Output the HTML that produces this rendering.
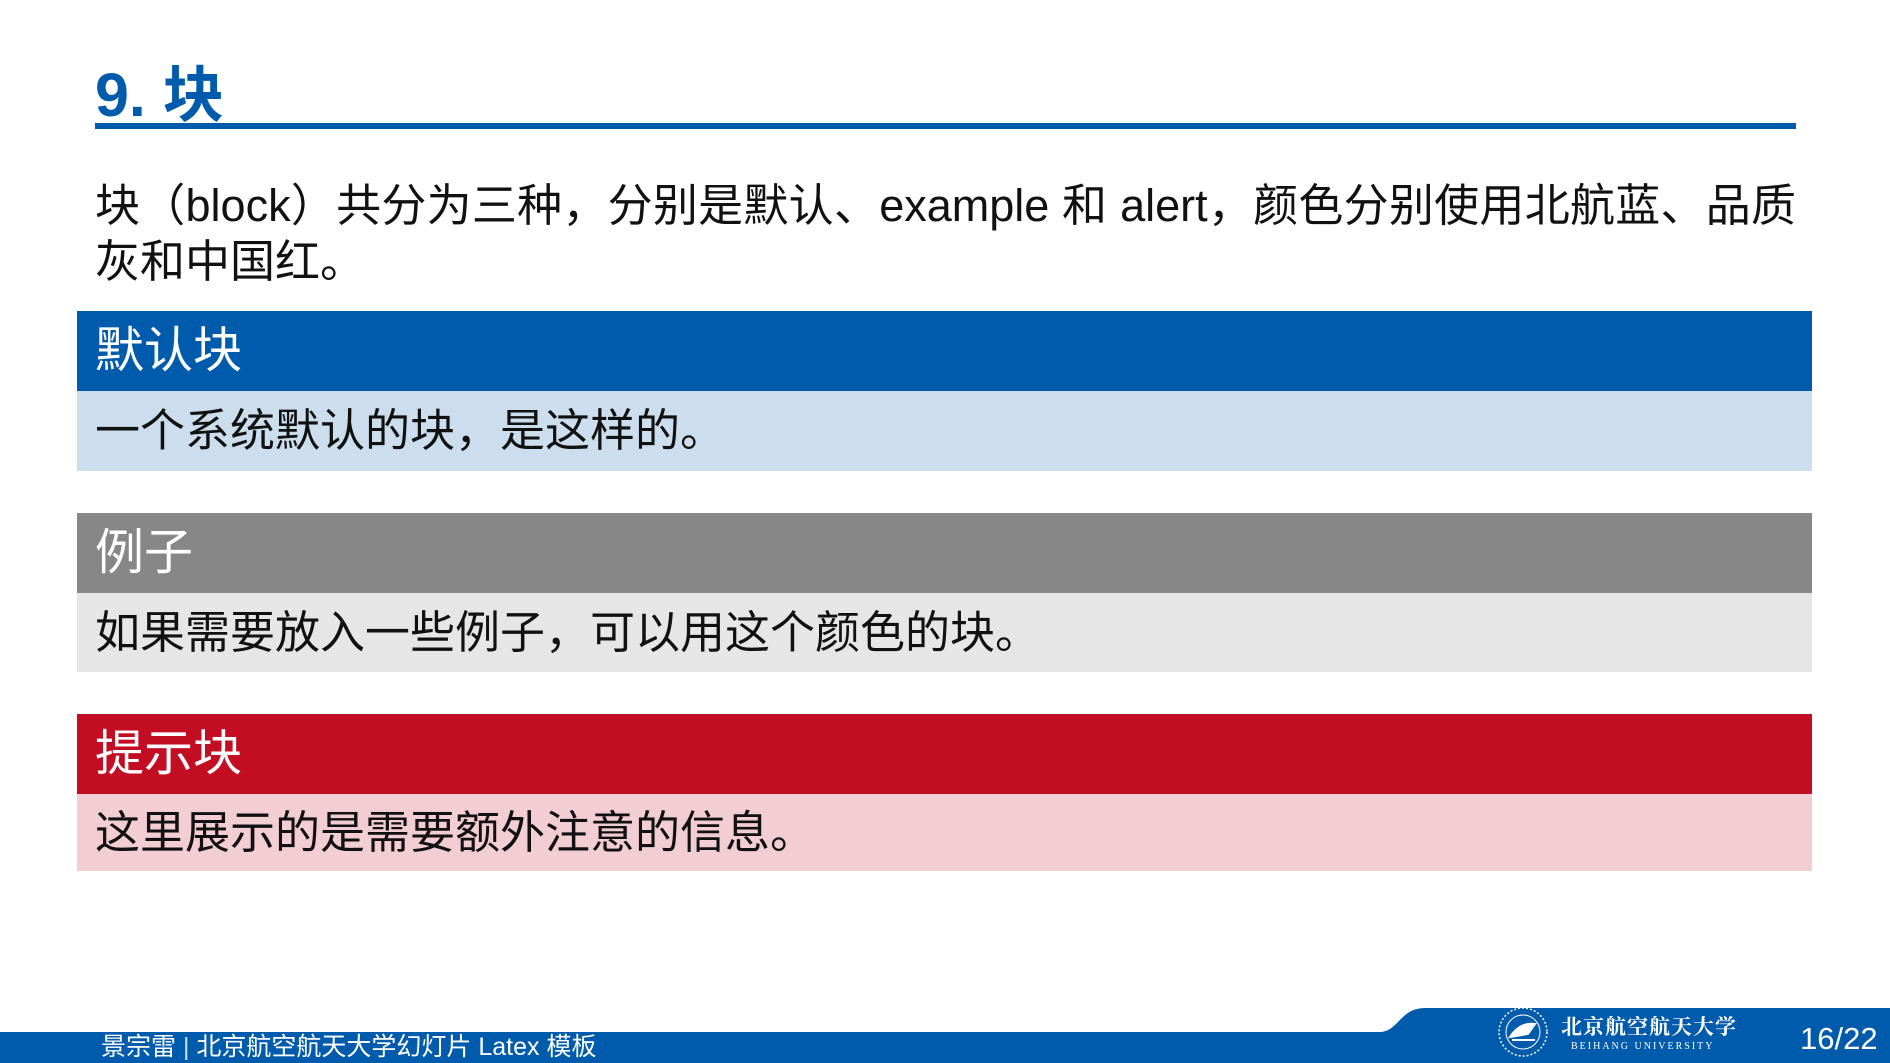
<!DOCTYPE html>
<html><head><meta charset="utf-8"><style>
body{margin:0;width:1890px;height:1063px;position:relative;overflow:hidden;background:#fff;font-family:"Liberation Sans","Noto Sans CJK SC",sans-serif;}
.a{position:absolute;}
.title{left:95px;top:57px;font-size:61px;font-weight:bold;color:#005BAC;line-height:76px;}
.rule{left:95px;top:123px;width:1701px;height:6px;background:#005BAC;}
.body{left:95px;top:178px;width:1701px;font-size:45px;line-height:56px;color:#111;}
.l1{display:block;text-align:justify;text-align-last:justify;white-space:nowrap;}
.h,.b{position:absolute;left:77px;width:1735px;box-sizing:border-box;padding-left:18px;}
.h{color:#fff;font-size:49px;}
.b{color:#111;font-size:45px;}
</style></head><body>
<div class="a title">9. 块</div>
<div class="a rule"></div>
<div class="a body"><span class="l1">块（block）共分为三种，分别是默认、example 和 alert，颜色分别使用北航蓝、品质</span>灰和中国红。</div>

<div class="h" style="top:311px;height:80px;line-height:80px;background:#005BAC">默认块</div>
<div class="b" style="top:391px;height:80px;line-height:80px;background:#CCDDED">一个系统默认的块，是这样的。</div>

<div class="h" style="top:513px;height:80px;line-height:80px;background:#878787">例子</div>
<div class="b" style="top:593px;height:79px;line-height:79px;background:#E6E6E6">如果需要放入一些例子，可以用这个颜色的块。</div>

<div class="h" style="top:714px;height:80px;line-height:80px;background:#C30D23">提示块</div>
<div class="b" style="top:794px;height:77px;line-height:77px;background:#F3CDD4">这里展示的是需要额外注意的信息。</div>

<svg class="a" style="left:0;top:1000px" width="1890" height="63">
<path d="M0 32 H1380 C1398 32 1400 8 1425 8 H1890 V63 H0 Z" fill="#005BAC"/>
<circle cx="1523" cy="32" r="24" fill="none" stroke="#fff" stroke-width="1.5" stroke-dasharray="2 2"/>
<circle cx="1523" cy="32" r="17" fill="none" stroke="#fff" stroke-width="1"/>
<path d="M1510 37 Q1520 22 1535 24 L1528 34 Z M1512 40 H1535" fill="#fff" stroke="#fff" stroke-width="2"/>
</svg>
<div class="a" style="left:101px;top:1031px;height:32px;line-height:32px;font-size:25px;color:#fff">景宗雷 <span style="opacity:.8">|</span> 北京航空航天大学幻灯片 Latex 模板</div>
<div class="a" style="left:1561px;top:1012px;font-size:21px;font-weight:bold;letter-spacing:1px;color:#fff;font-family:'Noto Serif CJK SC',serif;line-height:28px">北京航空航天大学</div>
<div class="a" style="left:1571px;top:1041px;font-size:10px;letter-spacing:2px;color:#fff;font-family:'Liberation Serif',serif">BEIHANG UNIVERSITY</div>
<div class="a" style="left:1800px;top:1020px;font-size:31px;color:#fff;line-height:38px">16/22</div>
</body></html>
